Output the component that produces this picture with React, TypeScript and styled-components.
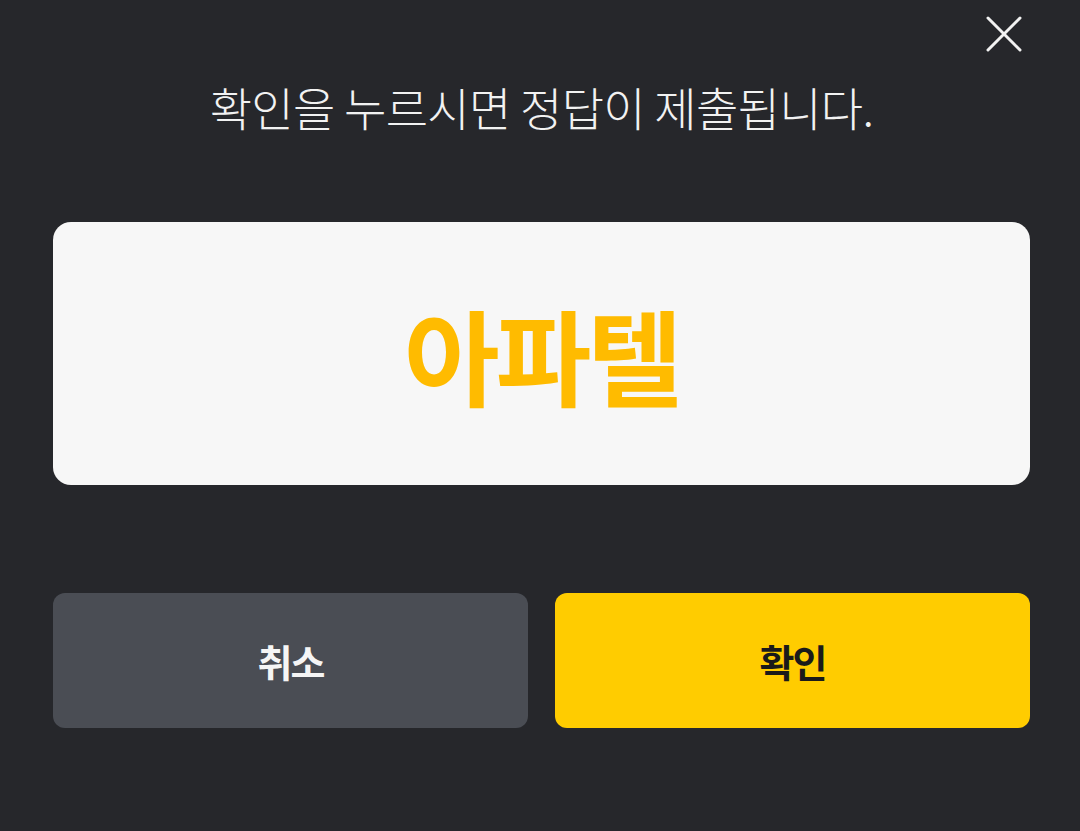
import React from 'react'
import styled, { createGlobalStyle } from 'styled-components'

const GlobalStyle = createGlobalStyle`
  html, body {
    margin: 0;
    padding: 0;
    background: #26272b;
  }
  body {
    font-family: 'Noto Sans CJK KR', 'Noto Sans', sans-serif;
  }
`

const Sheet = styled.div`
  position: relative;
  width: 1080px;
  height: 831px;
  box-sizing: border-box;
  background: #26272b;
  padding: 75px 50px 0 53px;
  display: flex;
  flex-direction: column;
`

const CloseButton = styled.button`
  position: absolute;
  top: 16px;
  right: 58px;
  width: 36px;
  height: 36px;
  padding: 0;
  border: 0;
  background: transparent;
  cursor: pointer;
  display: flex;
  align-items: center;
  justify-content: center;
`

const Message = styled.p`
  margin: 0;
  text-align: center;
  color: #f2f2f2;
  font-size: 46px;
  font-weight: 300;
  line-height: 62px;
  letter-spacing: -0.7px;
`

const AnswerCard = styled.div`
  margin-top: 85px;
  height: 263px;
  border-radius: 18px;
  background: #f7f7f7;
  display: flex;
  align-items: center;
  justify-content: center;
`

const AnswerText = styled.span`
  color: #ffbb00;
  font-size: 104px;
  font-weight: 700;
  letter-spacing: -4px;
  line-height: 1;
`

const ButtonRow = styled.div`
  margin-top: 108px;
  display: grid;
  grid-template-columns: 1fr 1fr;
  gap: 27px;
`

const ActionButton = styled.button<{ $primary?: boolean }>`
  height: 135px;
  border: 0;
  border-radius: 12px;
  background: ${p => (p.$primary ? '#ffcc00' : '#4a4d54')};
  color: ${p => (p.$primary ? '#1a1a1a' : '#f5f5f5')};
  font-family: 'Noto Sans CJK KR', 'Noto Sans', sans-serif;
  font-size: 38px;
  font-weight: 700;
  letter-spacing: -2px;
  cursor: pointer;
`

const App = () => {
  return (
    <>
      <GlobalStyle />
      <Sheet>
        <CloseButton aria-label="닫기">
          <svg width="36" height="36" viewBox="0 0 36 36">
            <path d="M2 2 L34 34 M34 2 L2 34" stroke="#f2f2f2" strokeWidth="3" strokeLinecap="round" />
          </svg>
        </CloseButton>
        <Message>확인을 누르시면 정답이 제출됩니다.</Message>
        <AnswerCard>
          <AnswerText>아파텔</AnswerText>
        </AnswerCard>
        <ButtonRow>
          <ActionButton>취소</ActionButton>
          <ActionButton $primary>확인</ActionButton>
        </ButtonRow>
      </Sheet>
    </>
  )
}

export default App
